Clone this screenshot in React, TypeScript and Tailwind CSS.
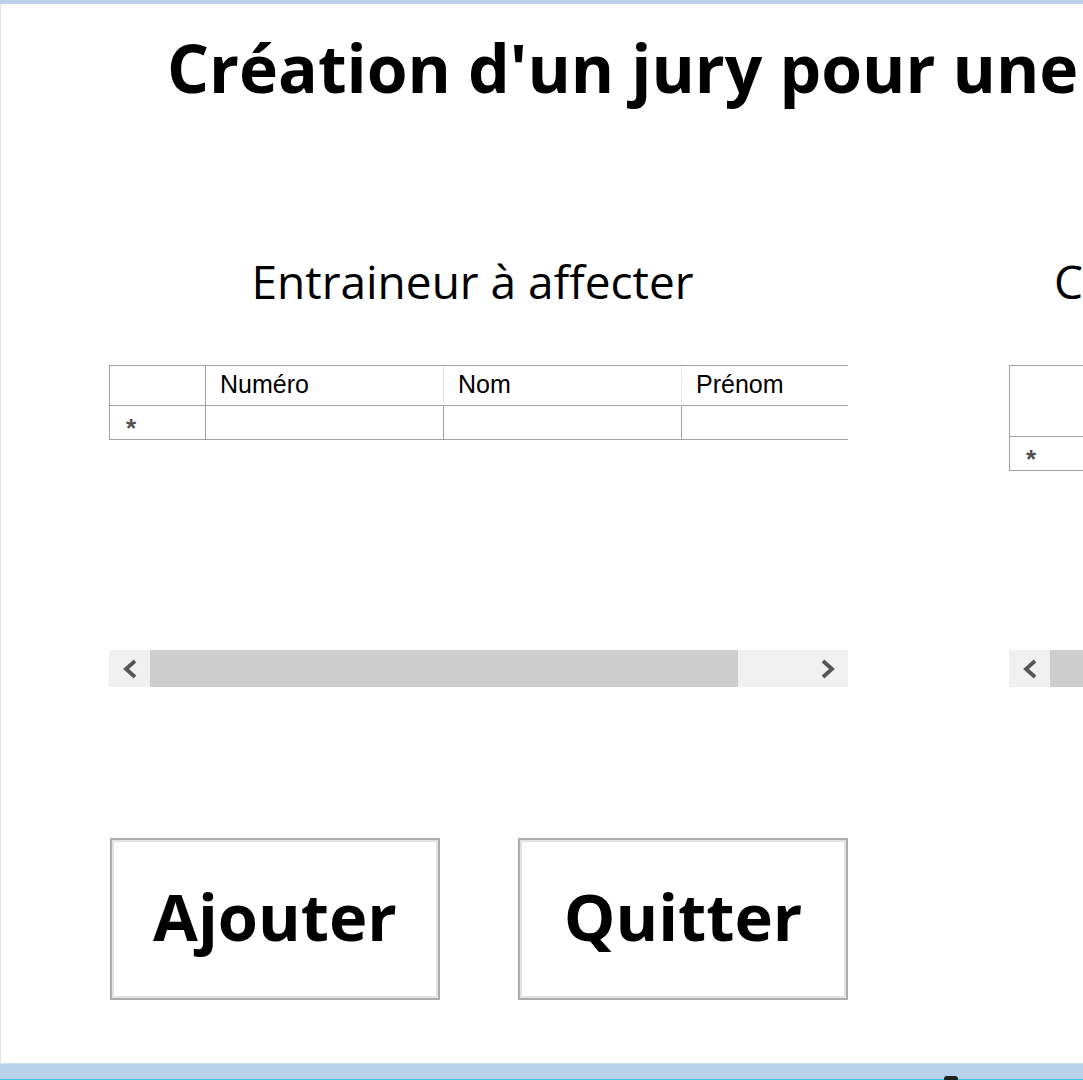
import type { JSX } from "react";

function Chevron({ dir }: { dir: "left" | "right" }): JSX.Element {
    return (
        <svg width="18" height="22" viewBox="0 0 18 22" fill="none">
            <polyline
                points={dir === "left" ? "14,3 5,11 14,19" : "4,3 13,11 4,19"}
                stroke="#555555"
                strokeWidth="3.8"
                strokeLinejoin="miter"
            />
        </svg>
    );
}

function ScrollBar({ thumb }: { thumb: number }): JSX.Element {
    return (
        <div className="flex h-[37px] w-full bg-[#f0f0f0]">
            <div className="flex w-[41px] shrink-0 items-center justify-center">
                <Chevron dir="left" />
            </div>
            <div className="h-full shrink-0 bg-[#cdcdcd]" style={{ width: thumb }}></div>
            <div className="flex-1"></div>
            <div className="flex w-[41px] shrink-0 items-center justify-center">
                <Chevron dir="right" />
            </div>
        </div>
    );
}

function EmptyGrid({ columns, headerH }: { columns: string[]; headerH: number }): JSX.Element {
    return (
        <div className="flex-1 overflow-hidden">
            <div className="flex w-max border-t border-[#a0a0a0]" style={{ height: headerH }}>
                <div className="w-[97px] shrink-0 border-r border-b border-l border-[#a0a0a0]"></div>
                {columns.map((c, i) => (
                    <div
                        key={c}
                        className={
                            "flex w-[238px] shrink-0 items-center border-b border-[#a0a0a0] pl-[14px] pb-[1px] text-[25px] text-black " +
                            (i < columns.length - 1 ? "border-r border-r-[#e6e6e6]" : "")
                        }
                    >
                        {c}
                    </div>
                ))}
            </div>
            <div className="flex h-[34px] w-max">
                <div className="flex w-[97px] shrink-0 items-end border-r border-b border-l border-[#a0a0a0] pl-[16px] text-[26px] font-bold leading-[22px] text-[#505050]">
                    *
                </div>
                {columns.map((c) => (
                    <div key={c} className="w-[238px] shrink-0 border-r border-b border-[#a0a0a0]"></div>
                ))}
            </div>
        </div>
    );
}

function BigButton({ label }: { label: string }): JSX.Element {
    return (
        <button className="flex h-[162px] w-[330px] shrink-0 items-center justify-center border-2 border-[#adadad] bg-white pb-[4px] font-['Open_Sans',sans-serif] text-[65px] font-bold text-black shadow-[inset_0_0_0_2px_#e3e3e3]">
            {label}
        </button>
    );
}

export default function App(): JSX.Element {
    return (
        <div className="relative flex h-[1080px] w-[1083px] flex-col overflow-hidden bg-white font-['Liberation_Sans',Arial,sans-serif]">
            <div className="h-[4px] shrink-0 bg-[#b9d1ea]"></div>
            <div className="flex-1 overflow-hidden border-l border-[#e2e2e2]">
                <h1 className="mt-[30px] whitespace-nowrap pl-[166px] font-['Open_Sans',sans-serif] text-[66px] font-bold leading-[66px] text-black">
                    Création d'un jury pour une
                </h1>
                <div className="mt-[158px] flex gap-[161px] pl-[108px]">
                    <div className="flex w-[739px] shrink-0 flex-col">
                        <div className="h-[46px] whitespace-nowrap pr-[12px] text-center font-['Open_Sans',sans-serif] text-[46px] leading-[46px] text-black">
                            Entraineur à affecter
                        </div>
                        <div className="mt-[61px] flex h-[322px] flex-col">
                            <EmptyGrid columns={["Numéro", "Nom", "Prénom"]} headerH={41} />
                            <ScrollBar thumb={588} />
                        </div>
                        <div className="mt-[151px] flex gap-[78px] pl-[1px]">
                            <BigButton label="Ajouter" />
                            <BigButton label="Quitter" />
                        </div>
                    </div>
                    <div className="flex w-[739px] shrink-0 flex-col">
                        <div className="h-[46px] whitespace-nowrap pl-[45px] font-['Open_Sans',sans-serif] text-[46px] leading-[46px] text-black">
                            Composition du jury
                        </div>
                        <div className="mt-[61px] flex h-[322px] flex-col">
                            <EmptyGrid columns={["Numéro", "Nom", "Prénom"]} headerH={72} />
                            <ScrollBar thumb={588} />
                        </div>
                    </div>
                </div>
            </div>
            <div className="h-[16px] shrink-0 border-t border-[#cddff1] bg-[#b9d1ea]"></div>
            <div className="h-[1px] shrink-0 bg-[#3ec6e2]"></div>
            <div className="absolute bottom-0 left-[944px] h-[4px] w-[14px] rounded-t-[3px] bg-[#222]"></div>
        </div>
    );
}
